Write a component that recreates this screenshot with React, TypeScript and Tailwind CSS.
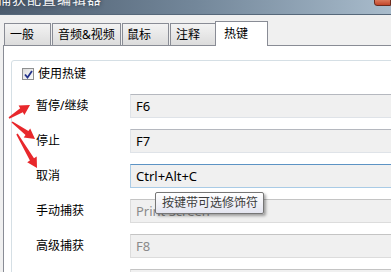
import React from 'react';

type Pt = { x1: number; y1: number; x2: number; y2: number };

// tapered red annotation arrow
const Arrow = ({ x1, y1, x2, y2 }: Pt) => {
  const dx = x2 - x1;
  const dy = y2 - y1;
  const len = Math.hypot(dx, dy);
  const ux = dx / len;
  const uy = dy / len;
  const nx = -uy;
  const ny = ux;
  const hl = 10;
  const hw = 5.5;
  const s0 = 0.8;
  const s1 = 2.4;
  const bx = x2 - ux * hl;
  const by = y2 - uy * hl;
  const p = (x: number, y: number) => `${x.toFixed(1)},${y.toFixed(1)}`;
  const pts = [
    p(x1 + nx * s0, y1 + ny * s0),
    p(bx + nx * s1, by + ny * s1),
    p(bx + nx * hw, by + ny * hw),
    p(x2, y2),
    p(bx - nx * hw, by - ny * hw),
    p(bx - nx * s1, by - ny * s1),
    p(x1 - nx * s0, y1 - ny * s0),
  ].join(' ');
  return <polygon points={pts} fill="#e8282c" />;
};

const rows = [
  { label: '暂停/继续', value: 'F6', state: 'normal' },
  { label: '停止', value: 'F7', state: 'normal' },
  { label: '取消', value: 'Ctrl+Alt+C', state: 'focus' },
  { label: '手动捕获', value: 'Print Screen', state: 'disabled' },
  { label: '高级捕获', value: 'F8', state: 'disabled' },
  { label: '', value: '', state: 'disabled' },
];

const inputCls: Record<string, string> = {
  normal: 'border-[#dfe3e8] border-t-[#b5b8bf] text-black',
  focus: 'border-[#a9cbe6] border-t-[#5c93c4] text-black',
  disabled: 'border-[#dcdcdc] border-t-[#c4c4c4] text-[#8a8a8a]',
};

const App = () => {
  return (
    <div className="relative w-[391px] h-[272px] overflow-hidden bg-[#f0f0f0] font-['Noto_Sans','Noto_Sans_CJK_SC',sans-serif] text-[12px] leading-[16px] text-black">
      {/* title bar */}
      <div className="relative h-[15px] bg-gradient-to-r from-[#4c5c6e] via-[#73879a] to-[#a9bccc] border-b border-[#56687a] overflow-hidden">
        <div className="absolute left-[-3px] top-[-9px] text-[14px] leading-[16px] text-[#f4f6f8] tracking-[1px] [text-shadow:0_0_4px_#2a3440]">
          捕获配置编辑器
        </div>
        <div className="absolute right-0 top-[-3px] w-[17px] h-[9px] rounded-bl-[3px] border border-[#6b2a1c] bg-gradient-to-b from-[#e28a6c] to-[#c2452a]" />
      </div>

      {/* tabs */}
      <div className="flex items-end h-[30px] pl-[4px]">
        {['一般', '音频&视频', '鼠标', '注释'].map((t, i) => (
          <div
            key={t}
            className={`h-[22px] flex items-center border border-b-0 border-[#898c95] bg-gradient-to-b from-[#f3f3f3] to-[#dcdcdc] ${
              ['w-[47px] pl-[5px]', 'w-[69px] ml-[1px] pl-[5px]', 'w-[47px] ml-[1px] pl-[4px]', 'w-[46px] ml-[1px] pl-[5px]'][i]
            }`}
          >
            {t}
          </div>
        ))}
        <div className="relative z-10 h-[25px] w-[53px] ml-[-1px] mb-[-1px] pl-[8px] pt-[4px] bg-white border border-b-0 border-[#898c95]">
          热键
        </div>
      </div>

      {/* panel */}
      <div className="ml-[3px] h-[300px] bg-white border-l border-t border-[#898c95]">
        <div className="ml-[7px] mt-[14px] w-[420px] h-[300px] border border-[#d5dfe5] rounded-[3px] pt-[7px]">
          <div className="flex items-center h-[12px] pl-[10px]">
            <div className="w-[12px] h-[12px] border border-[#8e8f8f] bg-gradient-to-br from-[#dcdcdc] to-[#fbfbfb] flex items-center justify-center">
              <svg width="9" height="9" viewBox="0 0 9 9">
                <path d="M1 4.5 L3.5 7.5 L8 1" stroke="#22328a" strokeWidth="1.8" fill="none" />
              </svg>
            </div>
            <span className="ml-[4px]">使用热键</span>
          </div>

          <div className="mt-[14px] flex flex-col gap-[11px]">
            {rows.map((r, i) => (
              <div key={i} className="flex items-center h-[24px]">
                <div className="w-[118px] pl-[24px]">{r.label}</div>
                <div
                  className={`flex-1 h-[24px] flex items-center px-[5px] border bg-[#f0f0f0] text-[13px] ${inputCls[r.state]}`}
                >
                  {r.value}
                </div>
              </div>
            ))}
          </div>
        </div>
      </div>

      {/* tooltip */}
      <div className="absolute left-[155px] top-[192px] w-[109px] h-[22px] flex items-center pl-[6px] border border-[#767676] rounded-[2px] bg-gradient-to-b from-white to-[#e4e5f0] shadow-[2px_2px_3px_rgba(0,0,0,0.35)] text-[#3c3c3c]">
        按键带可选修饰符
      </div>

      {/* annotation arrows */}
      <svg className="absolute left-0 top-0" width="60" height="180" viewBox="0 0 60 180">
        <Arrow x1={9} y1={118} x2={30} y2={105} />
        <Arrow x1={12} y1={122} x2={35} y2={139} />
        <Arrow x1={17} y1={134} x2={37} y2={168} />
      </svg>
    </div>
  );
};

export default App;
